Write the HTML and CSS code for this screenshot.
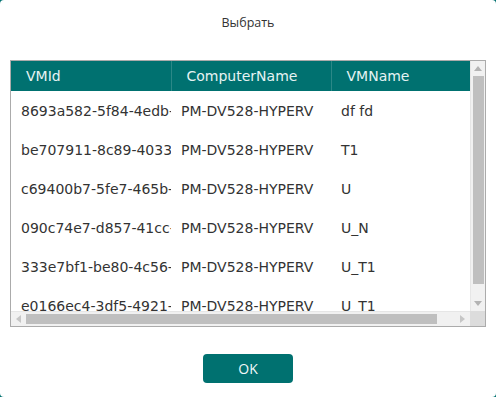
FILE: index.html
```html
<!DOCTYPE html>
<html lang="ru">
<head>
  <meta charset="UTF-8">
  <title>Выбрать</title>
  <link rel="stylesheet" href="styles.css">
</head>
<body>
  <div class="dialog">
    <div class="title">Выбрать</div>
    <div class="grid">
      <div class="viewport">
        <table>
          <thead>
            <tr><th>VMId</th><th>ComputerName</th><th>VMName</th></tr>
          </thead>
          <tbody>
            <tr><td>8693a582-5f84-4edb-9a31-2c7e</td><td>PM-DV528-HYPERV</td><td>df fd</td></tr>
            <tr><td>be707911-8c89-4033-b1f2-91d0</td><td>PM-DV528-HYPERV</td><td>T1</td></tr>
            <tr><td>c69400b7-5fe7-465b-8e0a-44c1</td><td>PM-DV528-HYPERV</td><td>U</td></tr>
            <tr><td>090c74e7-d857-41cc-a6b3-0f2e</td><td>PM-DV528-HYPERV</td><td>U_N</td></tr>
            <tr><td>333e7bf1-be80-4c56-97d4-5a18</td><td>PM-DV528-HYPERV</td><td>U_T1</td></tr>
            <tr><td>e0166ec4-3df5-4921-b7c0-6d3a</td><td>PM-DV528-HYPERV</td><td>U_T1</td></tr>
          </tbody>
        </table>
      </div>
      <div class="vscroll">
        <div class="sb-btn"><span class="arrow up"></span></div>
        <div class="sb-track"><div class="sb-thumb"></div></div>
        <div class="sb-btn"><span class="arrow down"></span></div>
      </div>
      <div class="hscroll">
        <div class="sb-btn"><span class="arrow left"></span></div>
        <div class="sb-track"><div class="sb-thumb"></div></div>
        <div class="sb-btn"><span class="arrow right"></span></div>
      </div>
      <div class="sb-corner"></div>
    </div>
    <div class="footer">
      <button class="btn-ok">OK</button>
    </div>
  </div>
</body>
</html>
```

FILE: styles.css
```css
html {
  background: #007170;
}
body {
  margin: 0;
  font-family: 'DejaVu Sans', sans-serif;
  color: #333;
}
.dialog {
  height: 397px;
  box-sizing: border-box;
  background: #fff;
  border-radius: 4px;
  padding: 14px 10px 0;
  display: flex;
  flex-direction: column;
}
.title {
  font-family: 'Open Sans', sans-serif;
  font-size: 12.5px;
  line-height: 18px;
  text-align: center;
  color: #333;
  margin-bottom: 28px;
}

/* grid with hand-drawn scrollbars */
.grid {
  height: 267px;
  box-sizing: border-box;
  border: 1px solid #ababab;
  display: grid;
  grid-template-columns: 1fr 15px;
  grid-template-rows: 1fr 15px;
}
.viewport {
  overflow: hidden;
  min-width: 0;
  min-height: 0;
}
table {
  border-collapse: collapse;
  table-layout: fixed;
  width: 480px;
}
th {
  background: #007170;
  color: #e6f3f3;
  font-weight: normal;
  font-size: 14px;
  text-align: left;
  height: 30px;
  padding: 0 0 0 15px;
  border-right: 1px solid #2b8887;
  white-space: nowrap;
  overflow: hidden;
}
th:last-child {
  border-right: none;
}
td {
  font-size: 14px;
  height: 39px;
  padding: 0 0 0 10px;
  white-space: nowrap;
  overflow: hidden;
  text-overflow: clip;
}

.vscroll, .hscroll {
  background: #f1f1f1;
  display: flex;
}
.vscroll {
  flex-direction: column;
  border-left: 1px solid #e6e6e6;
}
.hscroll {
  border-top: 1px solid #e6e6e6;
}
.sb-btn {
  flex: 0 0 15px;
  display: flex;
  align-items: center;
  justify-content: center;
}
.vscroll .sb-btn {
  height: 15px;
}
.sb-track {
  flex: 1;
  display: flex;
}
.vscroll .sb-track {
  flex-direction: column;
  align-items: center;
}
.hscroll .sb-track {
  align-items: center;
}
.sb-thumb {
  background: #bfbfbf;
}
.vscroll .sb-thumb {
  width: 11px;
  height: 208px;
}
.hscroll .sb-thumb {
  height: 10px;
  width: 411px;
}
.sb-corner {
  background: #dcdcdc;
}
.arrow {
  width: 0;
  height: 0;
  border: 4px solid transparent;
}
.arrow.up {
  border-bottom: 5px solid #b3b3b3;
  border-top: none;
  margin-top: -1px;
}
.arrow.down {
  border-top: 5px solid #b3b3b3;
  border-bottom: none;
}
.arrow.left {
  border-right: 5px solid #c6c6c6;
  border-left: none;
}
.arrow.right {
  border-left: 5px solid #c6c6c6;
  border-right: none;
}

.footer {
  display: flex;
  justify-content: center;
  margin-top: 27px;
}
.btn-ok {
  width: 90px;
  height: 29px;
  border: none;
  border-radius: 4px;
  background: #007170;
  color: #f2f8f8;
  font-family: 'Open Sans', sans-serif;
  font-size: 14px;
  cursor: pointer;
}
```
